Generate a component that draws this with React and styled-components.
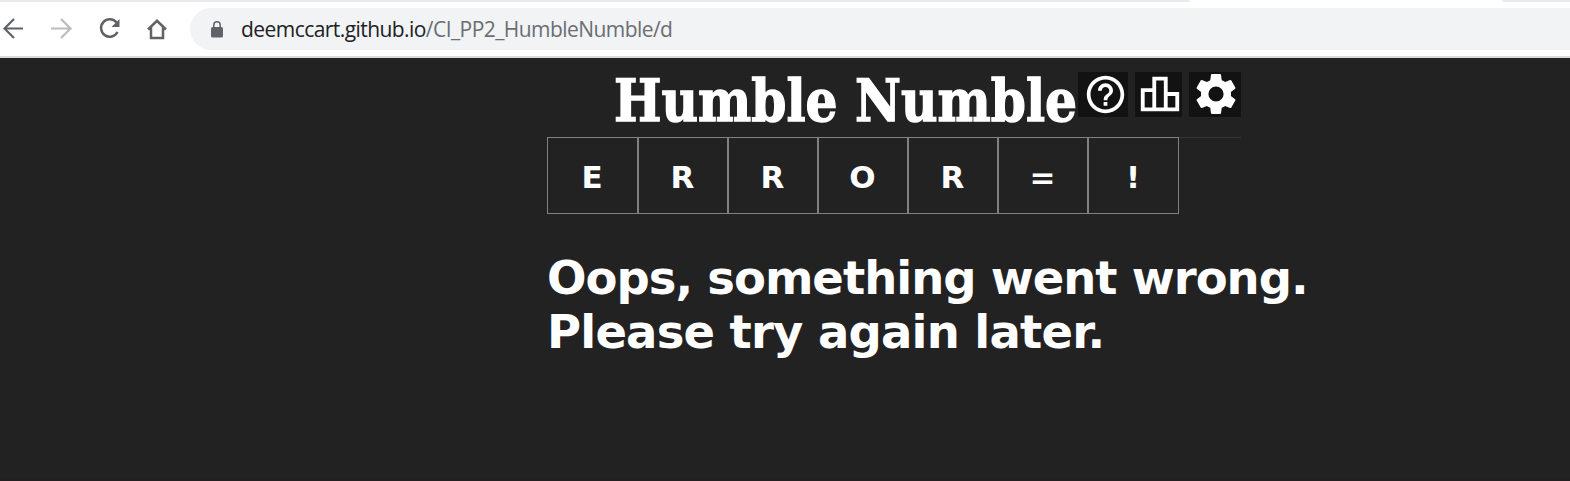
import React from 'react';
import styled, { createGlobalStyle } from 'styled-components';
import { MdHelpOutline, MdOutlineLeaderboard } from 'react-icons/md';

const GlobalStyle = createGlobalStyle`
  * { box-sizing: border-box; }
  body { margin: 0; background: #222; overflow: hidden; }
`;

const Page = styled.div`
  height: 481px;
  background: #222;
  color: #fff;
  border-bottom: 2px solid #231f20;
  font-family: Verdana, "DejaVu Sans", sans-serif;
`;

const TabStrip = styled.div`
  display: flex;
  justify-content: space-between;
  height: 2px;
  background: #fff;
`;

const TabEdge = styled.div`
  width: ${(p) => p.$width}px;
  background: #e8eaed;
  border-radius: ${(p) => (p.$end ? '0 0 0 2px' : '0 0 2px 0')};
`;

const Toolbar = styled.div`
  display: flex;
  align-items: center;
  height: 56px;
  background: #fff;
  border-bottom: 2px solid #d9dbdd;
`;

const NavButtons = styled.div`
  display: flex;
  gap: 20px;
  width: 190px;
`;

const NavIcon = styled.svg`
  display: block;
  width: 28px;
  height: 28px;
  fill: none;
  stroke: ${(p) => (p.$muted ? '#babcbe' : '#5f6368')};
  stroke-width: 2.2;
`;

const AddressBar = styled.div`
  display: flex;
  align-items: center;
  flex: 1;
  height: 42px;
  padding-left: 21px;
  background: #f1f3f4;
  border-radius: 21px 0 0 21px;
  color: #5f6368;
`;

const LockIcon = styled.svg`
  display: block;
  width: 12px;
  height: 17px;
`;

const Url = styled.span`
  margin-left: 18px;
  font: 21px/30px "Open Sans", sans-serif;
  letter-spacing: -0.56px;
  white-space: pre;
  color: #6b6e72;
`;

const Host = styled.span`
  color: #202124;
`;

const Game = styled.main`
  width: 694px;
  margin-left: 547px;
`;

const Header = styled.header`
  display: flex;
  align-items: flex-start;
  height: 80px;
  padding: 14px 0 0 67px;
  border-bottom: 1px solid #353535;
`;

const Title = styled.h1`
  width: 464px;
  margin: 0;
  font: bold 58px/58px "DejaVu Serif", serif;
  white-space: nowrap;
  -webkit-text-stroke: 1.4px #fff;
  transform: scaleX(0.867);
  transform-origin: left;
`;

const Actions = styled.div`
  display: flex;
  gap: 7px;
`;

const ActionButton = styled.button`
  display: flex;
  align-items: center;
  justify-content: center;
  flex: none;
  width: ${(p) => p.$width}px;
  height: 45px;
  padding: 0 0 ${(p) => p.$lift || 0}px ${(p) => p.$shift || 0}px;
  border: 0;
  background: #121213;
  color: #fff;

  svg { flex: none; }
`;

const Tiles = styled.div`
  display: grid;
  grid-template-columns: 91px repeat(5, 90px) 91px;
  height: 77px;
  margin-top: -1px;
`;

const Tile = styled.div`
  display: flex;
  align-items: center;
  justify-content: center;
  padding: 2px 1px 0 0;
  border: 1px solid #808080;
  font-size: 31px;
  font-weight: bold;
`;

const Message = styled.p`
  margin: 37px 0 0;
  font-size: 46.5px;
  font-weight: bold;
  line-height: 54px;
  white-space: nowrap;
`;

const Line = styled.span`
  display: block;
  letter-spacing: ${(p) => p.$tracking || 0}px;
`;

const Gear = () => (
  <svg width="48" height="48" viewBox="0 0 24 24" fill="currentColor">
    <path
      fillRule="evenodd"
      d="M19.43 12.98c.04-.32.07-.64.07-.98s-.03-.66-.07-.98l2.110-1.650c.19-.15.24-.42.12-.64l-2-3.460c-.12-.22-.39-.3-.61-.22l-2.490 1c-.52-.4-1.080-.73-1.690-.98l-.38-2.650C14.460 2.180 14.250 2 14 2h-4c-.25 0-.46.18-.49.42l-.38 2.650c-.61.25-1.170.59-1.690.98l-2.490-1c-.23-.09-.49 0-.61.22l-2 3.460c-.13.22-.07.49.12.64l2.110 1.650c-.04.32-.07.65-.07.98s.03.66.07.98l-2.110 1.650c-.19.15-.24.42-.12.64l2 3.460c.12.22.39.3.61.22l2.490-1c.52.4 1.080.73 1.690.98l.38 2.650c.03.24.24.42.49.42h4c.25 0 .46-.18.49-.42l.38-2.650c.61-.25 1.170-.59 1.690-.98l2.490 1c.23.09.49 0 .61-.22l2-3.460c.12-.22.07-.49-.12-.64zM12 15.800a3.800 3.800 0 1 1 0-7.600 3.800 3.800 0 0 1 0 7.600z"
    />
  </svg>
);

export default function App() {
  return (
    <Page>
      <GlobalStyle />
      <TabStrip>
        <TabEdge $width={1190} />
        <TabEdge $width={68} $end />
      </TabStrip>
      <Toolbar>
        <NavButtons>
          <NavIcon viewBox="0 0 28 28"><path d="M23 13.500H5M14 4L4.500 13.500l9.500 9.500" /></NavIcon>
          <NavIcon viewBox="0 0 28 28" $muted><path d="M3 13.500h19M13 4L22.500 13.500 13 23" /></NavIcon>
          <NavIcon viewBox="0 0 28 28">
            <path d="M20.500 7.500A8.700 8.700 0 1 0 21.500 17" strokeWidth="2.500" />
            <path d="M23.500 4v8h-8z" fill="#5f6368" stroke="none" />
          </NavIcon>
          <NavIcon viewBox="0 0 28 28"><path d="M4 14.500L13 5.800l9 8.700M7 12v11h12V12" strokeWidth="2.500" /></NavIcon>
        </NavButtons>
        <AddressBar>
          <LockIcon viewBox="0 0 12 17">
            <rect y="6" width="12" height="10.500" rx="1.500" fill="currentColor" />
            <path d="M2.800 6.500V4a3.200 3.200 0 0 1 6.400 0v2.500" fill="none" stroke="currentColor" strokeWidth="1.500" />
          </LockIcon>
          <Url><Host>deemccart.github.io</Host>/CI_PP2_HumbleNumble/d</Url>
        </AddressBar>
      </Toolbar>
      <Game>
        <Header>
          <Title>Humble Numble</Title>
          <Actions>
            <ActionButton $width={50} $shift={4} $lift={1} aria-label="Help"><MdHelpOutline size={45} /></ActionButton>
            <ActionButton $width={47} $shift={2} $lift={2} aria-label="Statistics"><MdOutlineLeaderboard size={46} /></ActionButton>
            <ActionButton $width={52} $shift={1} $lift={1} aria-label="Settings"><Gear /></ActionButton>
          </Actions>
        </Header>
        <Tiles>
          {[...'ERROR=!'].map((c, i) => <Tile key={i}>{c}</Tile>)}
        </Tiles>
        <Message>
          <Line $tracking={-1}>Oops, something went wrong.</Line>
          <Line $tracking={-0.82}>Please try again later.</Line>
        </Message>
      </Game>
    </Page>
  );
}
